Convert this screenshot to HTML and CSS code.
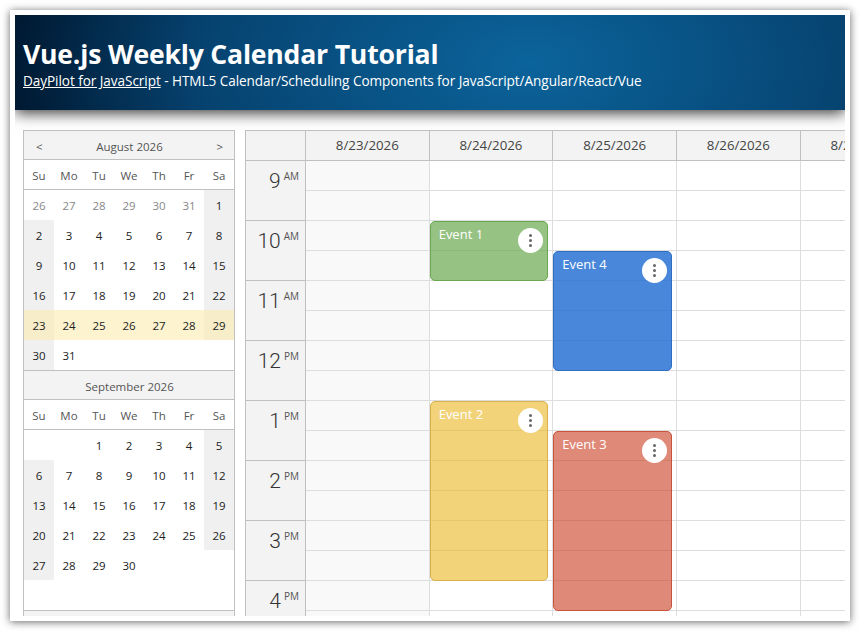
FILE: index.html
```html
<!DOCTYPE html>
<html>
<head>
    <title>Vue.js Weekly Calendar Tutorial</title>
    <link rel="stylesheet" href="styles.css">
</head>
<body>
    <div class="frame">
        <div class="page">
            <div class="header">
                <h1>Vue.js Weekly Calendar Tutorial</h1>
                <div class="subtitle"><a href="#">DayPilot for JavaScript</a> - HTML5 Calendar/Scheduling Components for JavaScript/Angular/React/Vue</div>
            </div>
            <div class="main">
                <div class="nav">
                    <div class="month-title"><span>&lt;</span><b>August 2026</b><span>&gt;</span></div>
                    <div class="dow"><span>Su</span><span>Mo</span><span>Tu</span><span>We</span><span>Th</span><span>Fr</span><span>Sa</span></div>
                    <div class="weeks">
                        <span class="other">26</span><span class="other">27</span><span class="other">28</span><span class="other">29</span><span class="other">30</span><span class="other">31</span><span class="weekend">1</span>
                        <span class="weekend">2</span><span>3</span><span>4</span><span>5</span><span>6</span><span>7</span><span class="weekend">8</span>
                        <span class="weekend">9</span><span>10</span><span>11</span><span>12</span><span>13</span><span>14</span><span class="weekend">15</span>
                        <span class="weekend">16</span><span>17</span><span>18</span><span>19</span><span>20</span><span>21</span><span class="weekend">22</span>
                        <span class="sel-weekend">23</span><span class="sel">24</span><span class="sel">25</span><span class="sel">26</span><span class="sel">27</span><span class="sel">28</span><span class="sel-weekend">29</span>
                        <span class="weekend">30</span><span>31</span><span></span><span></span><span></span><span></span><span></span>
                    </div>
                    <div class="month-title month-next"><b>September 2026</b></div>
                    <div class="dow"><span>Su</span><span>Mo</span><span>Tu</span><span>We</span><span>Th</span><span>Fr</span><span>Sa</span></div>
                    <div class="weeks">
                        <span></span><span></span><span>1</span><span>2</span><span>3</span><span>4</span><span class="weekend">5</span>
                        <span class="weekend">6</span><span>7</span><span>8</span><span>9</span><span>10</span><span>11</span><span class="weekend">12</span>
                        <span class="weekend">13</span><span>14</span><span>15</span><span>16</span><span>17</span><span>18</span><span class="weekend">19</span>
                        <span class="weekend">20</span><span>21</span><span>22</span><span>23</span><span>24</span><span>25</span><span class="weekend">26</span>
                        <span class="weekend">27</span><span>28</span><span>29</span><span>30</span><span></span><span></span><span></span>
                        <span></span><span></span><span></span><span></span><span></span><span></span><span></span>
                    </div>
                    <div class="month-title month-next"></div>
                </div>
                <div class="calendar">
                    <div class="times">
                        <div class="col-head"></div>
                        <div class="hour">9<small>AM</small></div>
                        <div class="hour">10<small>AM</small></div>
                        <div class="hour">11<small>AM</small></div>
                        <div class="hour">12<small>PM</small></div>
                        <div class="hour">1<small>PM</small></div>
                        <div class="hour">2<small>PM</small></div>
                        <div class="hour">3<small>PM</small></div>
                        <div class="hour">4<small>PM</small></div>
                    </div>
                    <div class="day sunday">
                        <div class="col-head">8/23/2026</div>
                        <div class="cells"></div>
                    </div>
                    <div class="day">
                        <div class="col-head">8/24/2026</div>
                        <div class="cells">
                            <div class="event green ev1">Event 1
                                <span class="menu"><svg width="3" height="13" viewBox="0 0 3 13"><circle cx="1.5" cy="1.5" r="1.5"/><circle cx="1.5" cy="6.5" r="1.5"/><circle cx="1.5" cy="11.5" r="1.5"/></svg></span>
                            </div>
                            <div class="event yellow ev2">Event 2
                                <span class="menu"><svg width="3" height="13" viewBox="0 0 3 13"><circle cx="1.5" cy="1.5" r="1.5"/><circle cx="1.5" cy="6.5" r="1.5"/><circle cx="1.5" cy="11.5" r="1.5"/></svg></span>
                            </div>
                        </div>
                    </div>
                    <div class="day">
                        <div class="col-head">8/25/2026</div>
                        <div class="cells">
                            <div class="event blue ev4">Event 4
                                <span class="menu"><svg width="3" height="13" viewBox="0 0 3 13"><circle cx="1.5" cy="1.5" r="1.5"/><circle cx="1.5" cy="6.5" r="1.5"/><circle cx="1.5" cy="11.5" r="1.5"/></svg></span>
                            </div>
                            <div class="event red ev3">Event 3
                                <span class="menu"><svg width="3" height="13" viewBox="0 0 3 13"><circle cx="1.5" cy="1.5" r="1.5"/><circle cx="1.5" cy="6.5" r="1.5"/><circle cx="1.5" cy="11.5" r="1.5"/></svg></span>
                            </div>
                        </div>
                    </div>
                    <div class="day">
                        <div class="col-head">8/26/2026</div>
                        <div class="cells"></div>
                    </div>
                    <div class="day">
                        <div class="col-head">8/27/2026</div>
                        <div class="cells"></div>
                    </div>
                </div>
            </div>
        </div>
    </div>
</body>
</html>
```
FILE: styles.css
```css
html, body {
    margin: 0;
    height: 100%;
    overflow: hidden;
    background-color: #fff;
}
body {
    font-family: "Open Sans", "Noto Sans", sans-serif;
    color: #333;
}
.frame {
    margin: 10px;
    height: 601px;
    padding: 5px;
    background-color: #fff;
    box-shadow: 0 1px 8px rgba(0, 0, 0, 0.6);
}
.page {
    height: 601px;
    overflow: hidden;
}
.header {
    height: 95px;
    box-sizing: border-box;
    padding: 23px 8px 0;
    color: #fff;
    background: radial-gradient(ellipse 62% 300% at 62% 50%, #0b649c 0%, #06426f 65%, #001a33 100%);
    box-shadow: 0 3px 14px rgba(0, 0, 0, 0.8);
    position: relative;
}
.header h1 {
    margin: 0;
    font-size: 26.6px;
    letter-spacing: -0.2px;
    line-height: 33px;
    font-weight: 700;
}
.subtitle {
    font-size: 13.6px;
    letter-spacing: -0.07px;
    line-height: 19px;
}
.subtitle a {
    color: #fff;
}
.main {
    display: flex;
    gap: 10px;
    padding: 20px 0 0 8px;
}

/* navigator */
.nav {
    width: 210px;
    flex: none;
    border: 1px solid #c0c0c0;
    border-bottom: none;
    font-size: 11.5px;
}
.month-title {
    height: 26px;
    display: flex;
    justify-content: space-between;
    align-items: center;
    padding: 2px 11px 0 12px;
    background-color: #f3f3f3;
    border-bottom: 1px solid #c0c0c0;
    color: #555;
}
.month-title b {
    font-weight: 400;
    flex: 1;
    text-align: center;
}
.month-next {
    border-top: 1px solid #c0c0c0;
}
.dow, .weeks {
    display: grid;
    grid-template-columns: repeat(7, 30px);
    text-align: center;
}
.dow {
    height: 29px;
    line-height: 31px;
    color: #555;
    border-bottom: 1px solid #c0c0c0;
}
.weeks span {
    height: 30px;
    line-height: 31px;
    color: #222;
}
.weeks .other {
    color: #888;
}
.weeks .weekend {
    background-color: #f0f0f0;
}
.weeks .sel {
    background-color: #fdf3cf;
}
.weeks .sel-weekend {
    background-color: #f8edc9;
}

/* calendar */
.calendar {
    display: flex;
    flex: none;
    border-top: 1px solid #c0c0c0;
    border-left: 1px solid #c0c0c0;
    font-size: 13.3px;
}
.col-head {
    height: 29px;
    line-height: 29px;
    text-align: center;
    background-color: #f3f3f3;
    border-bottom: 1px solid #c0c0c0;
    color: #444;
}
.times {
    width: 59px;
    flex: none;
    border-right: 1px solid #c0c0c0;
}
.hour {
    height: 59px;
    background-color: #f3f3f3;
    border-bottom: 1px solid #c0c0c0;
    text-align: right;
    padding-right: 6px;
    font-family: Roboto, "Open Sans", sans-serif;
    font-size: 21px;
    line-height: 31px;
    font-weight: 300;
    color: #333;
}
.hour small {
    font-family: "Open Sans", sans-serif;
    font-size: 10px;
    font-weight: 400;
    vertical-align: 8px;
    margin-left: 3px;
    color: #555;
}
.day {
    width: 122.67px;
    flex: none;
    border-right: 1px solid #ddd;
}
.day .col-head {
    border-right: 1px solid #c0c0c0;
    margin-right: -1px;
}
.cells {
    position: relative;
    height: 480px;
    background-image: repeating-linear-gradient(to bottom, transparent 0, transparent 29px, #ddd 29px, #ddd 30px);
}
.sunday .cells {
    background-color: #f9f9f9;
}

/* events */
.event {
    position: absolute;
    left: 0;
    box-sizing: border-box;
    width: 118.5px;
    padding: 3px 8px;
    border: 1px solid;
    border-radius: 5px;
    color: #fff;
    font-size: 13px;
    line-height: 18px;
}
.ev1 { top: 60px; height: 60px; }
.ev2 { top: 240px; height: 180px; }
.ev4 { top: 90px; height: 120px; }
.ev3 { top: 270px; height: 180px; }
.green { background-color: rgba(106, 168, 79, 0.7); border-color: #6aa84f; }
.yellow { background-color: rgba(235, 187, 50, 0.65); border-color: #d8b24a; }
.blue { background-color: rgba(33, 109, 210, 0.82); border-color: #2e6fc4; }
.red { background-color: rgba(204, 65, 37, 0.62); border-color: #c9533c; }
.menu {
    position: absolute;
    top: 6px;
    right: 4px;
    width: 25px;
    height: 25px;
    border-radius: 50%;
    background-color: #fff;
    display: flex;
    align-items: center;
    justify-content: center;
}
.menu svg {
    fill: #666;
}
```
